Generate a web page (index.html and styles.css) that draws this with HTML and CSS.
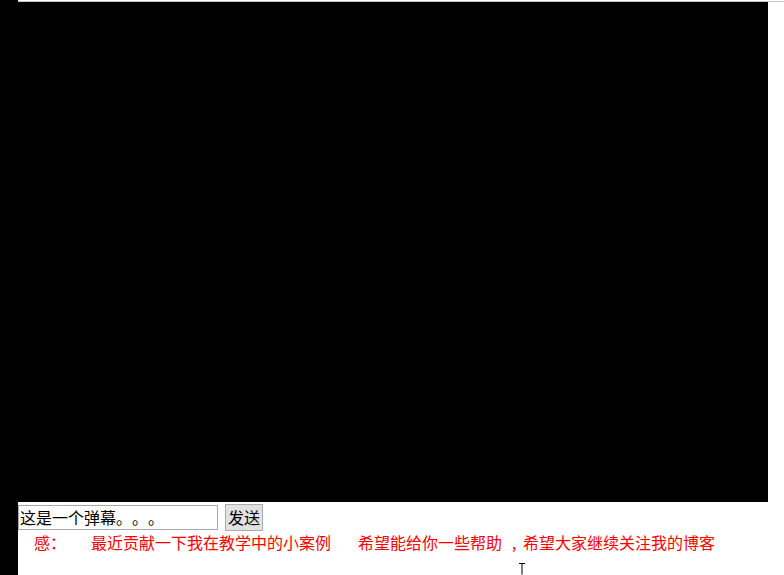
FILE: index.html
```html
<!DOCTYPE html>
<html lang="zh-CN">
<head>
<meta charset="utf-8">
<title>弹幕</title>
<link rel="stylesheet" href="styles.css">
</head>
<body>
<div class="page">
  <div class="strip"></div>
  <div class="main">
    <div class="topline"></div>
    <div class="screen"></div>
    <div class="controls">
      <input class="msg" type="text" value="这是一个弹幕。。。">
      <button class="send">发送</button>
    </div>
    <div class="danmu">
      <span class="seg s1">感：</span><span class="seg s2">最近贡献一下我在教学中的小案例</span><span class="seg s3">希望能给你一些帮助</span><span class="seg s4">,</span><span class="seg s5">希望大家继续关注我的博客</span>
    </div>
  </div>
</div>
<svg class="cursor" width="8" height="12" viewBox="0 0 8 12"><path d="M1 0.5H7M4 0.5V11.5" stroke="#000" stroke-width="1" fill="none"/></svg>
</body>
</html>
```
FILE: styles.css
```css
html, body {
  margin: 0;
  padding: 0;
  background: #fff;
}
body {
  width: 784px;
  height: 575px;
  overflow: hidden;
  position: relative;
  font-family: "Noto Sans CJK SC", "Noto Sans", sans-serif;
  text-spacing-trim: space-all;
}
.page {
  display: flex;
  height: 575px;
}
.strip {
  width: 18px;
  background: #000;
  flex: none;
}
.main {
  flex: 1;
}
.topline {
  height: 1px;
  margin-top: 1px;
  background: #c4c4c4;
}
.screen {
  width: 750px;
  height: 500px;
  background: #000;
}
.controls {
  display: flex;
  align-items: center;
  gap: 7px;
  height: 28px;
  margin-top: 1px;
}
.msg {
  box-sizing: border-box;
  width: 200px;
  height: 25px;
  margin: 0;
  padding: 0 1px;
  border: 1px solid #a9a9a9;
  font-family: "Noto Sans CJK SC", sans-serif;
  font-size: 16px;
  line-height: 23px;
  color: #000;
  background: #fff;
  outline: none;
  text-spacing-trim: space-all;
}
.send {
  box-sizing: border-box;
  width: 38px;
  height: 27px;
  margin: 0;
  padding: 0;
  border: 1px solid #adadad;
  background: #e1e1e1;
  font-family: "Noto Sans CJK SC", sans-serif;
  font-size: 16px;
  line-height: 25px;
  color: #000;
}
.danmu {
  display: flex;
  align-items: baseline;
  height: 20px;
  margin-top: 1px;
  color: #f00;
  font-size: 16px;
  line-height: 20px;
  white-space: nowrap;
}
.seg {
  flex: none;
}
.s1 { margin-left: 16px; }
.s2 { margin-left: 25px; }
.s3 { margin-left: 27px; }
.s4 { margin-left: 10px; width: 11px; }
.s5 { margin-left: 0; }
.cursor {
  position: absolute;
  left: 518px;
  top: 563px;
}
```
